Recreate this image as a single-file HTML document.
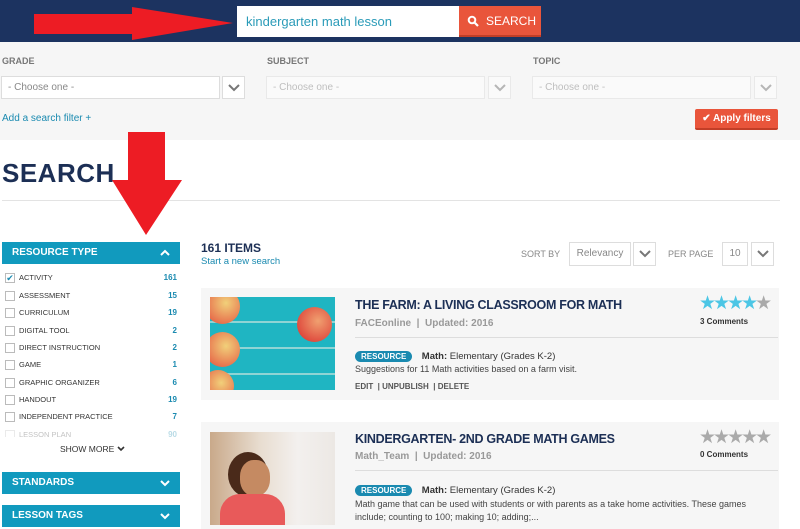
<!DOCTYPE html>
<html><head><meta charset="utf-8"><style>
*{box-sizing:border-box;margin:0;padding:0}
body{width:800px;height:529px;overflow:hidden;background:#fff;font-family:"Liberation Sans",sans-serif;position:relative;color:#1c2f55}
.abs{position:absolute}
.hdr{left:0;top:0;width:800px;height:42px;background:#1c3360}
.sbox{left:237px;top:6px;width:222px;height:31px;background:#fff;color:#2a9bb8;font-size:13px;line-height:31px;padding-left:9px}
.sbtn{left:459px;top:6px;width:82px;height:31px;background:#e9553b;border-bottom:2px solid #c23e27;color:#fff;font-size:12px;line-height:30px;padding-left:27px}
.filt{left:0;top:42px;width:800px;height:98px;background:#f6f6f6}
.lbl{font-size:9px;font-weight:bold;color:#777}
.sel{height:23px;background:#fff;border:1px solid #ddd;font-size:10px;color:#888;line-height:21px;padding-left:6px}
.selb{width:23px;height:23px;background:#fff;border:1px solid #ddd}
.selb svg{position:absolute;left:5px;top:6px}
.dim{opacity:.5}
.side{left:2px;width:178px;height:22px;background:#119abe;color:#fff;font-size:10px;font-weight:bold;line-height:22px;padding-left:10px}
.side svg{position:absolute;right:10px;top:7px}
.row{left:5px;width:172px;font-size:7.5px;color:#333;height:17px;line-height:13px}
.row i{display:inline-block;width:10px;height:10px;border:1px solid #bbb;vertical-align:middle;margin-right:4px;background:#fff}
.row b{position:absolute;right:0;color:#1a8ab0;font-size:8px}
.card{left:201px;width:578px;background:#f6f6f6}
.ttl{font-size:12.5px;font-weight:bold;color:#1c2f55;letter-spacing:-0.3px}
.meta{font-size:10px;color:#999;font-weight:bold}
.hr{height:1px;background:#ddd;width:423px}
.badge{background:#1a8ab0;color:#fff;font-size:8px;font-weight:bold;border-radius:7px;padding:1px 6px;line-height:11px}
.txt{font-size:9px;color:#444}
.stars{font-size:19px;letter-spacing:-3px;line-height:20px}
</style></head><body>
<div class="abs hdr"></div>
<svg class="abs" style="left:0;top:0" width="240" height="45"><polygon points="34,14 132,14 132,7 233,23 132,40 132,34 34,34" fill="#ed1c24"/></svg>
<div class="abs sbox">kindergarten math lesson</div>
<div class="abs sbtn">SEARCH</div>
<svg class="abs" style="left:467px;top:15px" width="12" height="12"><circle cx="5" cy="5" r="3.3" stroke="#fff" stroke-width="2" fill="none"/><line x1="7.5" y1="7.5" x2="11" y2="11" stroke="#fff" stroke-width="2.2"/></svg>
<div class="abs filt"></div>
<div class="abs lbl" style="left:2px;top:56px">GRADE</div>
<div class="abs lbl" style="left:267px;top:56px">SUBJECT</div>
<div class="abs lbl" style="left:533px;top:56px">TOPIC</div>
<div class="abs sel" style="left:1px;top:76px;width:219px">- Choose one -</div><div class="abs selb" style="left:222px;top:76px"><svg width="12" height="10"><polyline points="1,2 6,7 11,2" stroke="#777" stroke-width="2" fill="none"/></svg></div>
<div class="abs sel dim" style="left:266px;top:76px;width:219px">- Choose one -</div><div class="abs selb dim" style="left:488px;top:76px"><svg width="12" height="10"><polyline points="1,2 6,7 11,2" stroke="#777" stroke-width="2" fill="none"/></svg></div>
<div class="abs sel dim" style="left:532px;top:76px;width:219px">- Choose one -</div><div class="abs selb dim" style="left:754px;top:76px"><svg width="12" height="10"><polyline points="1,2 6,7 11,2" stroke="#777" stroke-width="2" fill="none"/></svg></div>
<div class="abs" style="left:2px;top:113px;font-size:10px;color:#1a8ab0">Add a search filter +</div>
<div class="abs" style="left:695px;top:109px;width:83px;height:21px;background:#e9553b;border-bottom:2px solid #c23e27;border-radius:2px;color:#fff;font-size:10px;font-weight:bold;line-height:20px;text-align:center">&#10004; Apply filters</div>
<div class="abs" style="left:2px;top:158px;font-size:26px;font-weight:bold;color:#1c2f55;letter-spacing:.5px">SEARCH</div>
<div class="abs" style="left:2px;top:200px;width:778px;height:1px;background:#e3e3e3"></div>
<svg class="abs" style="left:100px;top:125px" width="100" height="115"><polygon points="28,7 65,7 65,55 82,55 46,110 12,55 28,55" fill="#ed1c24"/></svg>
<div class="abs side" style="top:242px">RESOURCE TYPE<svg width="10" height="8"><polyline points="1,6 5,2 9,6" stroke="#fff" stroke-width="2" fill="none"/></svg></div>
<div class="abs row" style="top:271px"><i style="text-align:center;font-style:normal;font-size:9px;line-height:8px;color:#1a8ab0">&#10004;</i>ACTIVITY<b>161</b></div>
<div class="abs row" style="top:289px"><i></i>ASSESSMENT<b>15</b></div>
<div class="abs row" style="top:306px"><i></i>CURRICULUM<b>19</b></div>
<div class="abs row" style="top:324px"><i></i>DIGITAL TOOL<b>2</b></div>
<div class="abs row" style="top:341px"><i></i>DIRECT INSTRUCTION<b>2</b></div>
<div class="abs row" style="top:358px"><i></i>GAME<b>1</b></div>
<div class="abs row" style="top:376px"><i></i>GRAPHIC ORGANIZER<b>6</b></div>
<div class="abs row" style="top:393px"><i></i>HANDOUT<b>19</b></div>
<div class="abs row" style="top:410px"><i></i>INDEPENDENT PRACTICE<b>7</b></div>
<div class="abs row" style="top:428px;opacity:.3;height:9px;overflow:hidden"><i></i>LESSON PLAN<b>90</b></div>
<div class="abs" style="left:60px;top:444px;font-size:8.5px;color:#333">SHOW MORE <svg width="8" height="6"><polyline points="1,1 4,4 7,1" stroke="#333" stroke-width="1.6" fill="none"/></svg></div>
<div class="abs side" style="top:472px">STANDARDS<svg width="10" height="8"><polyline points="1,2 5,6 9,2" stroke="#fff" stroke-width="2" fill="none"/></svg></div>
<div class="abs side" style="top:505px">LESSON TAGS<svg width="10" height="8"><polyline points="1,2 5,6 9,2" stroke="#fff" stroke-width="2" fill="none"/></svg></div>
<div class="abs" style="left:201px;top:241px;font-size:12px;font-weight:bold">161 ITEMS</div>
<div class="abs" style="left:201px;top:256px;font-size:9.5px;color:#1a8ab0">Start a new search</div>
<div class="abs lbl" style="left:521px;top:249px;font-size:9px;font-weight:normal;color:#888">SORT BY</div>
<div class="abs sel" style="left:569px;top:242px;width:62px;height:24px;text-align:center;padding:0">Relevancy</div><div class="abs selb" style="left:633px;top:242px;height:24px"><svg width="12" height="10"><polyline points="1,2 6,7 11,2" stroke="#777" stroke-width="2" fill="none"/></svg></div>
<div class="abs lbl" style="left:668px;top:249px;font-size:9px;font-weight:normal;color:#888">PER PAGE</div>
<div class="abs sel" style="left:722px;top:242px;width:26px;height:24px;text-align:center;padding:0">10</div><div class="abs selb" style="left:751px;top:242px;height:24px"><svg width="12" height="10"><polyline points="1,2 6,7 11,2" stroke="#777" stroke-width="2" fill="none"/></svg></div>

<div class="abs card" style="top:288px;height:112px"></div>
<div class="abs" style="left:210px;top:297px;width:125px;height:93px;background:repeating-linear-gradient(180deg,#1fb5c2 0 24px,#8fd4d4 24px 26px),#1fb5c2;overflow:hidden">
<div class="abs" style="left:-5px;top:-8px;width:35px;height:35px;border-radius:50%;background:radial-gradient(circle at 60% 40%,#f1d07a,#e34a3a)"></div>
<div class="abs" style="left:-5px;top:35px;width:35px;height:35px;border-radius:50%;background:radial-gradient(circle at 60% 40%,#f1d07a,#e34a3a)"></div>
<div class="abs" style="left:-8px;top:73px;width:32px;height:32px;border-radius:50%;background:radial-gradient(circle at 60% 40%,#f1d07a,#e34a3a)"></div>
<div class="abs" style="left:87px;top:10px;width:35px;height:35px;border-radius:50%;background:radial-gradient(circle at 60% 40%,#f0a070,#d92b2b)"></div>
</div>
<div class="abs ttl" style="left:355px;top:298px">THE FARM: A LIVING CLASSROOM FOR MATH</div>
<div class="abs meta" style="left:355px;top:318px">FACEonline &nbsp;|&nbsp; Updated: 2016</div>
<div class="abs stars" style="left:699px;top:294px;color:#4cc6e5">★★★★<span style="color:#aaa">★</span></div>
<div class="abs" style="left:700px;top:317px;font-size:8px;font-weight:bold;color:#333">3 Comments</div>
<div class="abs hr" style="left:355px;top:337px"></div>
<div class="abs" style="left:355px;top:346px"><span class="badge">RESOURCE</span> <span style="font-size:9.5px;color:#333;margin-left:5px"><b>Math:</b> Elementary (Grades K-2)</span></div>
<div class="abs txt" style="left:355px;top:364px">Suggestions for 11 Math activities based on a farm visit.</div>
<div class="abs" style="left:355px;top:382px;font-size:8px;font-weight:bold;color:#555">EDIT &nbsp;| UNPUBLISH &nbsp;| DELETE</div>

<div class="abs card" style="top:422px;height:107px"></div>
<div class="abs" style="left:210px;top:432px;width:125px;height:93px;background:linear-gradient(90deg,#c9a98a 0,#e8ddd0 40%,#f3f0ee 70%,#ece8e4);overflow:hidden">
<div class="abs" style="left:18px;top:20px;width:40px;height:45px;border-radius:50%;background:#4a2a1a"></div>
<div class="abs" style="left:30px;top:28px;width:30px;height:36px;border-radius:45%;background:#c58a62"></div>
<div class="abs" style="left:10px;top:62px;width:65px;height:40px;border-radius:20px 20px 0 0;background:#e85a5a"></div>
</div>
<div class="abs ttl" style="left:355px;top:432px">KINDERGARTEN- 2ND GRADE MATH GAMES</div>
<div class="abs meta" style="left:355px;top:451px">Math_Team &nbsp;|&nbsp; Updated: 2016</div>
<div class="abs stars" style="left:699px;top:428px;color:#aaa">★★★★★</div>
<div class="abs" style="left:700px;top:450px;font-size:8px;font-weight:bold;color:#333">0 Comments</div>
<div class="abs hr" style="left:355px;top:470px"></div>
<div class="abs" style="left:355px;top:480px"><span class="badge">RESOURCE</span> <span style="font-size:9.5px;color:#333;margin-left:5px"><b>Math:</b> Elementary (Grades K-2)</span></div>
<div class="abs txt" style="left:355px;top:498px;width:420px;line-height:13px">Math game that can be used with students or with parents as a take home activities. These games include; counting to 100; making 10; adding;...</div>
</body></html>
